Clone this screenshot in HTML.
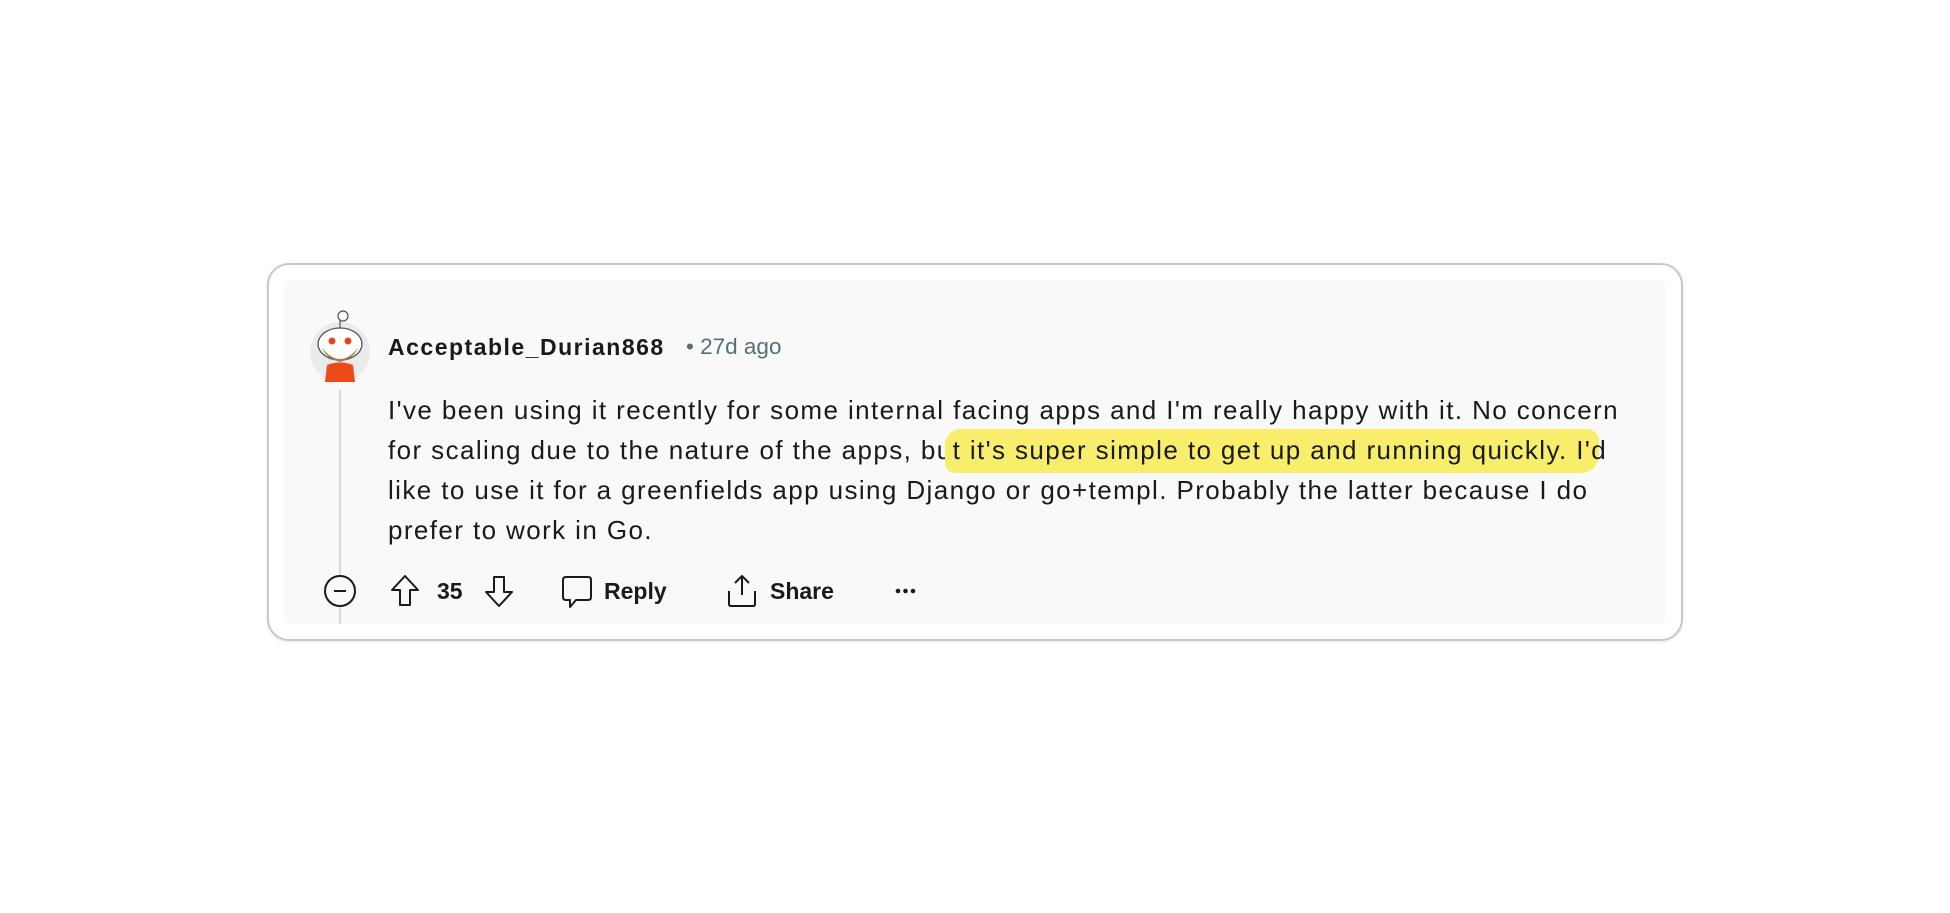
<!DOCTYPE html>
<html><head><meta charset="utf-8"><style>
*{margin:0;padding:0;box-sizing:border-box}
body{width:1950px;height:913px;background:#fff;font-family:"Liberation Sans",sans-serif;color:#1a1a1b;position:relative;overflow:hidden}
.outer{position:absolute;left:267px;top:263px;width:1416px;height:378px;border:2px solid #c8c8c8;border-radius:22px;background:#fff;box-shadow:0 1px 3px rgba(0,0,0,.1)}
.inner{position:absolute;left:284px;top:280px;width:1382px;height:344px;background:#f9f9f9;border-radius:10px}
.abs{position:absolute;white-space:nowrap}
.line{position:absolute;left:339px;top:390px;width:2px;height:234px;background:#d9d9d9}
.body{position:absolute;left:388px;font-size:26px;letter-spacing:1.4px;line-height:40px;white-space:nowrap}
.hl{background:#f8ee6c;padding:6px 8px 8px 8px;margin:0 -8px;border-radius:16px 12px 18px 10px}
.act{position:absolute;top:576px;font-size:23px;font-weight:bold;line-height:30px}
</style></head><body>
<div class="outer"></div>
<div class="inner"></div>
<div class="line"></div>
<svg class="abs" style="left:310px;top:310px" width="62" height="74" viewBox="0 0 62 74">
<circle cx="30" cy="42" r="30" fill="#e9ebec"/>
<circle cx="33" cy="6" r="5" fill="none" stroke="#555" stroke-width="1.2"/>
<path d="M30 10 L30 18" stroke="#555" stroke-width="1.2"/>
<ellipse cx="30" cy="34" rx="22" ry="16" fill="#fff" stroke="#555" stroke-width="1.3"/>
<path d="M12 38 Q30 60 48 38 Q44 48 30 52 Q16 48 12 38Z" fill="#b07a44"/>
<circle cx="22" cy="31" r="3.5" fill="#e8441c"/><circle cx="38" cy="31" r="3.5" fill="#e8441c"/>
<path d="M17 55 Q30 50 43 55 L45 72 L15 72Z" fill="#ee4a1a"/>
</svg>
<div class="abs" style="left:388px;top:332px;font-size:23px;letter-spacing:1.5px;font-weight:bold;line-height:30px">Acceptable_Durian868</div>
<div class="abs" style="left:686px;top:332px;font-size:22.5px;color:#576f76;line-height:30px">• 27d ago</div>
<div class="body" style="top:390px">I've been using it recently for some internal facing apps and I'm really happy with it. No concern</div>
<div class="body" style="top:430px">for scaling due to the nature of the apps, bu<span class="hl">t it's super simple to get up and running quickly. I'</span>d</div>
<div class="body" style="top:470px">like to use it for a greenfields app using Django or go+templ. Probably the latter because I do</div>
<div class="body" style="top:510px">prefer to work in Go.</div>
<svg class="abs" style="left:323px;top:574px" width="34" height="34" viewBox="0 0 34 34"><circle cx="17" cy="17" r="15" fill="#f9f9f9" stroke="#1a1a1b" stroke-width="2"/><path d="M11 17h12" stroke="#1a1a1b" stroke-width="2"/></svg>
<svg class="abs" style="left:388px;top:573px" width="34" height="36" viewBox="0 0 34 36"><path d="M17 3 L30 17 H22 V32 H12 V17 H4 Z" fill="none" stroke="#1a1a1b" stroke-width="2" stroke-linejoin="round"/></svg>
<div class="act" style="left:437px">35</div>
<svg class="abs" style="left:482px;top:573px" width="34" height="36" viewBox="0 0 34 36"><path d="M17 33 L30 19 H22 V4 H12 V19 H4 Z" fill="none" stroke="#1a1a1b" stroke-width="2" stroke-linejoin="round"/></svg>
<svg class="abs" style="left:560px;top:574px" width="34" height="36" viewBox="0 0 34 36"><path d="M6 3 H28 Q31 3 31 6 V23 Q31 26 28 26 H16 L10 33 V26 H6 Q3 26 3 23 V6 Q3 3 6 3Z" fill="none" stroke="#1a1a1b" stroke-width="2" stroke-linejoin="round"/></svg>
<div class="act" style="left:604px">Reply</div>
<svg class="abs" style="left:725px;top:573px" width="34" height="36" viewBox="0 0 34 36"><path d="M17 22 V3 M10 10 L17 3 L24 10 M4 18 V31 Q4 33 6 33 H28 Q30 33 30 31 V18" fill="none" stroke="#1a1a1b" stroke-width="2" stroke-linejoin="round"/></svg>
<div class="act" style="left:770px">Share</div>
<svg class="abs" style="left:894px;top:583px" width="24" height="16" viewBox="0 0 24 16"><circle cx="4" cy="8" r="2.3" fill="#1a1a1b"/><circle cx="11.5" cy="8" r="2.3" fill="#1a1a1b"/><circle cx="19" cy="8" r="2.3" fill="#1a1a1b"/></svg>
</body></html>
